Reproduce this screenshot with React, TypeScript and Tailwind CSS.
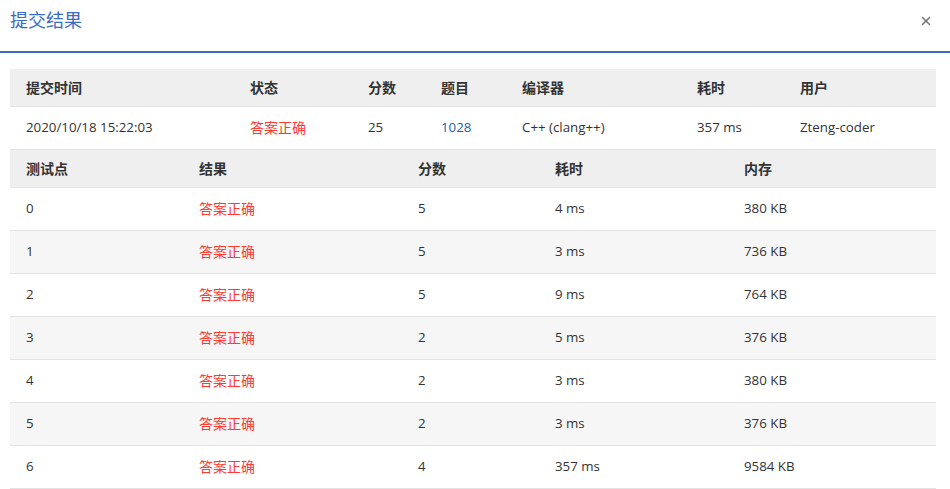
import { X } from "lucide-react";

const summaryCols = "grid-cols-[224px_118px_73px_81px_175px_103px_1fr]";
const caseCols = "grid-cols-[173px_219px_137px_189px_1fr]";

const cases = [
  { id: 0, score: 5, time: "4 ms", mem: "380 KB" },
  { id: 1, score: 5, time: "3 ms", mem: "736 KB" },
  { id: 2, score: 5, time: "9 ms", mem: "764 KB" },
  { id: 3, score: 2, time: "5 ms", mem: "376 KB" },
  { id: 4, score: 2, time: "3 ms", mem: "380 KB" },
  { id: 5, score: 2, time: "3 ms", mem: "376 KB" },
  { id: 6, score: 4, time: "357 ms", mem: "9584 KB" },
];

function Cn({ children }: { children: React.ReactNode }) {
  return <span className="text-[14px]">{children}</span>;
}

export default function App() {
  return (
    <div
      className="w-[950px] h-[489px] overflow-hidden bg-white text-[13.3px] text-[#333]"
      style={{ fontFamily: '"Open Sans", "Noto Sans CJK SC", sans-serif' }}
    >
      <div className="h-[53px] flex items-center justify-between pl-[10px] pr-[17px] border-b-2 border-[#3a6bc5]">
        <h1 className="text-[18px] text-[#3a6bc5] font-normal pb-[10px]">提交结果</h1>
        <X className="w-[14px] h-[14px] text-[#777] mb-[10px]" strokeWidth={2.6} />
      </div>

      <div className="ml-[10px] w-[926px] mt-[16px]">
        <div className={`grid ${summaryCols} h-[38px] items-center bg-[#efefef] border-b border-[#e3e3e3] font-semibold text-[14px] [&>div]:pl-[16px]`}>
          <div>提交时间</div>
          <div>状态</div>
          <div>分数</div>
          <div>题目</div>
          <div>编译器</div>
          <div>耗时</div>
          <div>用户</div>
        </div>
        <div className={`grid ${summaryCols} h-[43px] items-center border-b border-[#e3e3e3] [&>div]:pl-[16px]`}>
          <div>2020/10/18 15:22:03</div>
          <div className="text-[#ff3b30]"><Cn>答案正确</Cn></div>
          <div>25</div>
          <div className="text-[#2a5caa]">1028</div>
          <div>C++ (clang++)</div>
          <div>357 ms</div>
          <div>Zteng-coder</div>
        </div>

        <div className={`grid ${caseCols} h-[38px] items-center bg-[#efefef] border-b border-[#e3e3e3] font-semibold text-[14px] [&>div]:pl-[16px]`}>
          <div>测试点</div>
          <div>结果</div>
          <div>分数</div>
          <div>耗时</div>
          <div>内存</div>
        </div>
        {cases.map((c, i) => (
          <div
            key={c.id}
            className={`grid ${caseCols} h-[43px] items-center border-b border-[#e3e3e3] [&>div]:pl-[16px] ${
              i % 2 === 1 ? "bg-[#f6f6f6]" : "bg-white"
            }`}
          >
            <div>{c.id}</div>
            <div className="text-[#ff3b30]"><Cn>答案正确</Cn></div>
            <div>{c.score}</div>
            <div>{c.time}</div>
            <div>{c.mem}</div>
          </div>
        ))}
      </div>
    </div>
  );
}
